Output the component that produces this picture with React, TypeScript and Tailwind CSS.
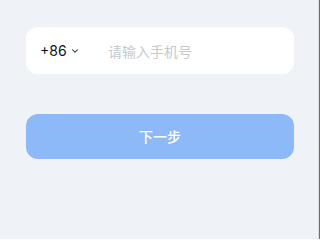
import { ChevronDown } from "lucide-react";

export default function App() {
  return (
    <div className="flex h-[239px] w-[320px] overflow-hidden bg-[#eff3f8] font-['Noto_Sans_CJK_SC',sans-serif]">
      <div className="flex-1 pl-[26px] pr-[24px] pt-[27px]">
        <div className="flex h-[47px] items-center rounded-[12px] bg-white pl-[14px]">
          <div className="flex w-[68px] items-center gap-[3px]">
            <span className="text-[14px] leading-none text-[#111] font-['Inter',sans-serif]">+86</span>
            <ChevronDown size={10} strokeWidth={2.5} className="mt-[1px] text-[#222]" />
          </div>
          <span className="text-[14px] leading-none text-[#c6cad0]">请输入手机号</span>
        </div>
        <button className="mt-[40px] flex h-[45px] w-full items-center justify-center rounded-[12px] bg-[#8db9f9] text-[14px] font-medium text-white">
          下一步
        </button>
      </div>
      <div className="w-[1px] bg-[#d9dde2]" />
      <div className="w-[1px] bg-[#6b6e72]" />
    </div>
  );
}
